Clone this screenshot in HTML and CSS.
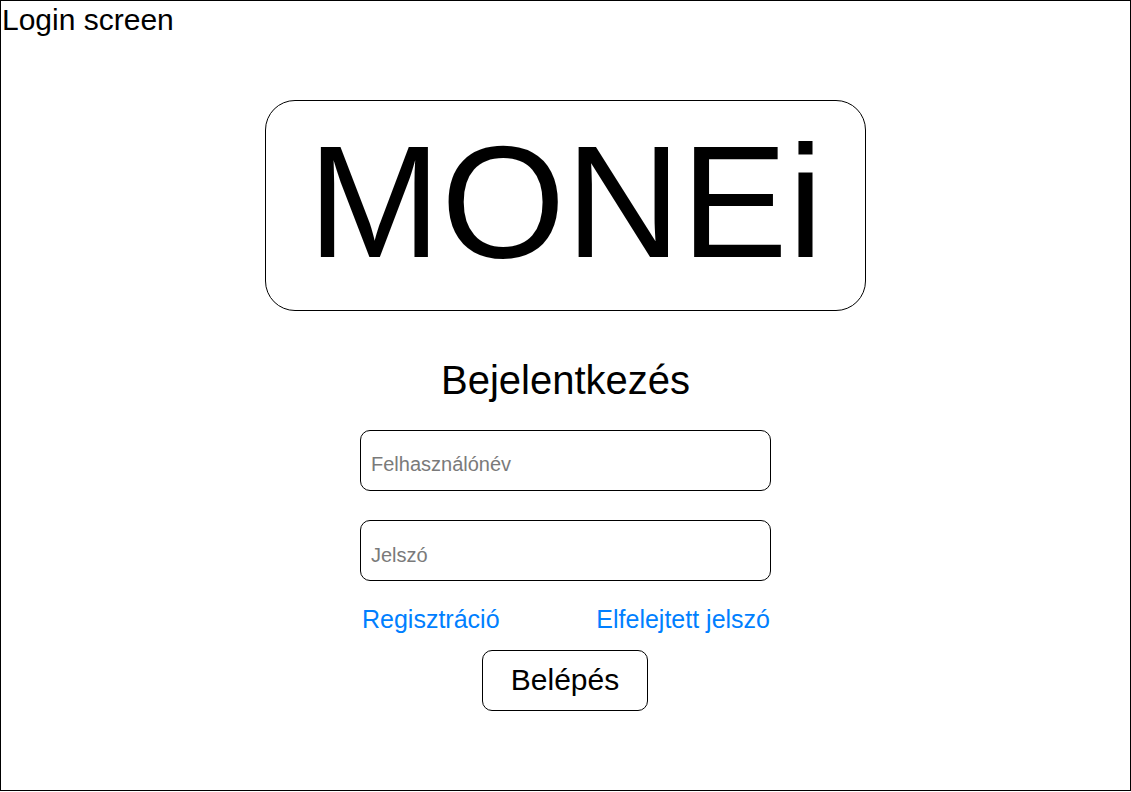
FILE: index.html
```html
<!DOCTYPE html>
<html lang="hu">
<head>
<meta charset="utf-8">
<title>Login screen</title>
<link rel="stylesheet" href="styles.css">
</head>
<body>
<div class="frame">
  <div class="caption">Login screen</div>
  <main class="login">
    <div class="logo">MONEi</div>
    <h1 class="heading">Bejelentkezés</h1>
    <input class="field field-user" type="text" placeholder="Felhasználónév">
    <input class="field field-pass" type="password" placeholder="Jelszó">
    <div class="links">
      <a class="link" href="#">Regisztráció</a>
      <a class="link" href="#">Elfelejtett jelszó</a>
    </div>
    <button class="submit" type="button">Belépés</button>
  </main>
</div>
</body>
</html>
```
FILE: styles.css
```css
html, body {
  margin: 0;
  padding: 0;
  background: #fff;
}

.frame {
  box-sizing: border-box;
  width: 1131px;
  height: 791px;
  border: 1px solid #000;
  font-family: "Liberation Sans", Arial, sans-serif;
  color: #000;
}

.caption {
  font-size: 30px;
  line-height: normal;
  padding: 2px 0 0 1px;
}

.login {
  display: flex;
  flex-direction: column;
  align-items: center;
  margin-top: 63px;
}

.logo {
  box-sizing: border-box;
  width: 601px;
  height: 211px;
  border: 1px solid #000;
  border-radius: 30px;
  display: flex;
  align-items: center;
  justify-content: center;
  padding-bottom: 8px;
  font-size: 160px;
  line-height: normal;
}

.heading {
  margin: 47px 0 0;
  font-size: 40px;
  font-weight: normal;
  line-height: normal;
}

.field {
  box-sizing: border-box;
  width: 411px;
  height: 61px;
  margin: 27px 0 0;
  padding: 8px 10px 0;
  border: 1px solid #000;
  border-radius: 10px;
  background: #fff;
  font-family: "Liberation Sans", Arial, sans-serif;
  font-size: 20px;
  color: #000;
  outline: none;
}

.field::placeholder {
  color: #7a7a7a;
  opacity: 1;
}

.field-pass {
  margin-top: 29px;
  padding-top: 10px;
}

.links {
  box-sizing: border-box;
  width: 411px;
  margin-top: 24px;
  padding: 0 1px 0 2px;
  display: flex;
  justify-content: space-between;
}

.link {
  font-size: 25px;
  line-height: normal;
  color: #007fff;
  text-decoration: none;
}

.submit {
  box-sizing: border-box;
  width: 166px;
  height: 61px;
  margin: 16px 1px 0 0;
  padding: 0 0 2px;
  border: 1px solid #000;
  border-radius: 10px;
  background: #fff;
  font-family: "Liberation Sans", Arial, sans-serif;
  font-size: 30px;
  color: #000;
  cursor: pointer;
}
```
